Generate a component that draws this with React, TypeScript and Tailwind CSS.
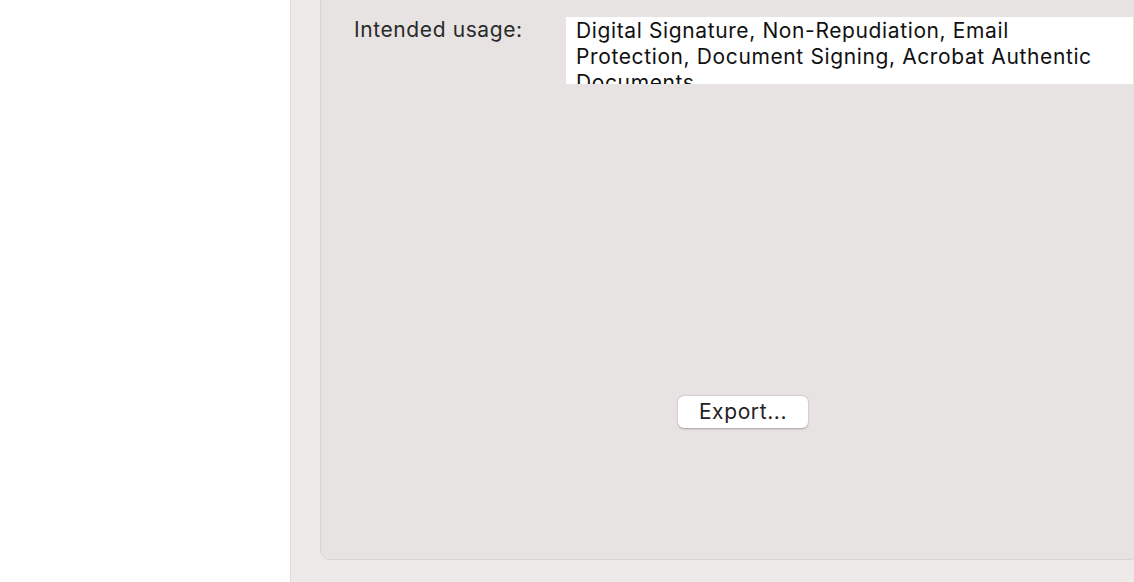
export default function App() {
  return (
    <div className="flex h-[582px] w-[1134px] overflow-hidden bg-[#efeaea] font-['Inter',sans-serif] text-[#222]">
      {/* Sidebar */}
      <div className="h-full w-[291px] shrink-0 border-r border-[#e0dada] bg-white" />

      {/* Content */}
      <div className="flex h-full flex-1 flex-col pl-[29px] pb-[22px]">
        <div className="-mt-[10px] -mr-[6px] flex flex-1 flex-col rounded-[10px] border border-[#d9d4d3] bg-[#e7e3e2]">
          <div className="flex pt-[26px]">
            <div className="w-[245px] shrink-0 pl-[33px] text-[21px] leading-[26px] tracking-[0.6px] text-[#2a2a2a]">
              Intended usage:
            </div>
            <div className="h-[67px] w-[567px] overflow-hidden bg-white px-[10px] pt-[1px] text-[21px] leading-[26px] tracking-[0.62px] text-[#111]">
              Digital Signature, Non-Repudiation, Email Protection, Document Signing, Acrobat Authentic Documents
            </div>
          </div>
          <div className="flex flex-1 items-start justify-center pt-[312px] pl-[26px]">
            <button className="h-[32px] w-[130px] rounded-[6px] bg-white text-[21px] leading-[26px] tracking-[0.6px] text-[#222] shadow-[0_0.5px_2px_rgba(0,0,0,0.3)]">
              Export...
            </button>
          </div>
        </div>
      </div>
    </div>
  );
}
